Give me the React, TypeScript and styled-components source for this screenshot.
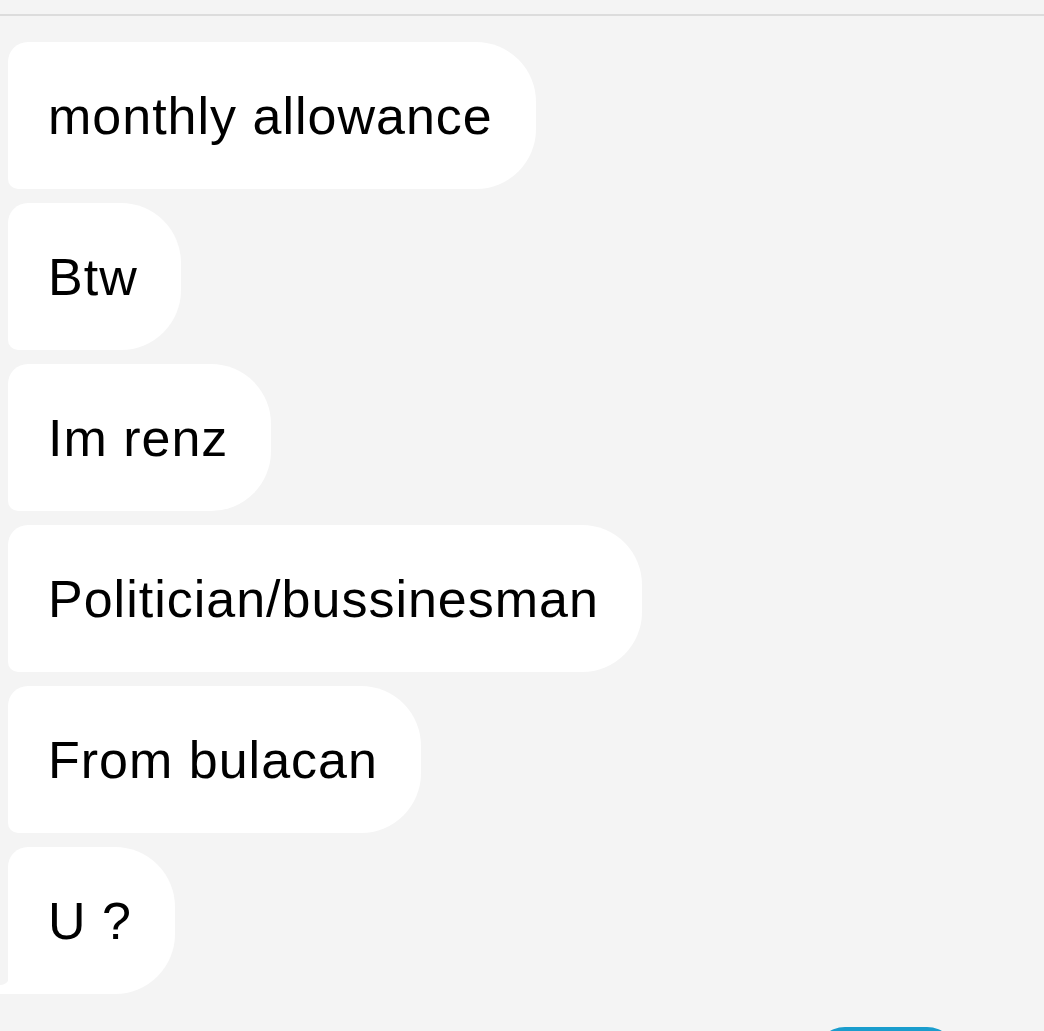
import React, { FC } from 'react';
import styled, { createGlobalStyle } from 'styled-components';

const GlobalStyle = createGlobalStyle`
    html, body {
        margin: 0;
        padding: 0;
        background: #f4f4f4;
        overflow: hidden;
    }
`

const Screen = styled.div`
    width: 1044px;
    height: 1031px;
    overflow: hidden;
    display: flex;
    flex-direction: column;
    background: #f4f4f4;
    font-family: "Liberation Sans", Arial, sans-serif;
`

const TopBar = styled.div`
    height: 14px;
    flex-shrink: 0;
    border-bottom: 2px solid #dcdcdc;
`

const MessageList = styled.div`
    display: flex;
    flex-direction: column;
    align-items: flex-start;
    gap: 14px;
    padding: 26px 0 0 8px;
`

const Bubble = styled.div<{ $tail?: boolean }>`
    position: relative;
    height: 147px;
    box-sizing: border-box;
    display: flex;
    align-items: center;
    padding: 0 43px 0 40px;
    background: #ffffff;
    color: #000000;
    font-size: 52px;
    letter-spacing: 1px;
    white-space: nowrap;
    border-radius: 20px 60px 60px ${(p) => (p.$tail ? '0' : '10px')};

    ${(p) => p.$tail && `
        &::before {
            content: '';
            position: absolute;
            left: -8px;
            bottom: 0;
            width: 8px;
            height: 19px;
            background: radial-gradient(circle at 0 0, transparent 9.5px, #ffffff 10.5px);
        }
    `}
`

const Footer = styled.div`
    display: flex;
    justify-content: flex-end;
    padding: 33px 87px 0 0;
`

const SendButton = styled.button`
    width: 142px;
    height: 60px;
    border: none;
    border-radius: 30px;
    background: #1a9dcd;
    flex-shrink: 0;
`

const messages = [
    'monthly allowance',
    'Btw',
    'Im renz',
    'Politician/bussinesman',
    'From bulacan',
    'U ?',
];

const App: FC = () => {
    return (
        <Screen>
            <GlobalStyle />
            <TopBar />
            <MessageList>
                {messages.map((text, i) => (
                    <Bubble key={i} $tail={i === messages.length - 1}>{text}</Bubble>
                ))}
            </MessageList>
            <Footer>
                <SendButton />
            </Footer>
        </Screen>
    )
}

export default App;
